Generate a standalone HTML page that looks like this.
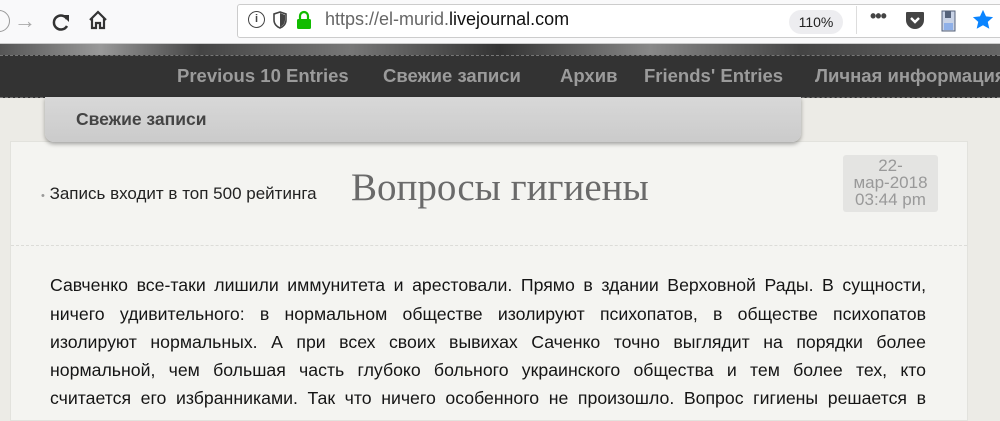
<!DOCTYPE html>
<html><head><meta charset="utf-8"><style>
*{margin:0;padding:0;box-sizing:border-box}
body{width:1000px;height:408px;overflow:hidden;background:#ecebe6;font-family:"Liberation Sans","DejaVu Sans",sans-serif;position:relative}
.abs{position:absolute}
#tb{left:0;top:0;width:1000px;height:44px;background:#f9f9fa;border-bottom:1px solid #ccc}
#url{left:237px;top:4px;width:770px;height:34px;background:#fff;border:1px solid #ccc;border-radius:3px}
#banner{left:0;top:44px;width:1000px;height:12px;background:linear-gradient(90deg,#555,#999 10%,#444 20%,#777 35%,#333 50%,#888 65%,#444 80%,#666)}
#nav{left:0;top:55px;width:1000px;height:43px;background:#333;border-top:1px dashed #777;border-bottom:1px dashed #777}
#nav span{position:absolute;top:9px;color:#9b9b9b;font-weight:bold;font-size:18.5px;white-space:nowrap}
#sub{left:45px;top:97px;width:756px;height:45px;background:linear-gradient(#d8d8d8,#cbcbcb);border-radius:0 0 9px 9px;box-shadow:0 2px 4px rgba(0,0,0,.35)}
#panel{left:10px;top:141px;width:958px;height:280px;background:#f4f4f1;border:1px solid #e2e2dd}
.ln{position:absolute;left:50px;width:876px;font-size:17.7px;color:#151515;text-align:justify;text-align-last:justify;line-height:20px;height:21px;overflow:hidden}
</style></head><body>
<div id="tb" class="abs"></div>
<div class="abs" style="left:-12px;top:10px;width:22px;height:22px;border:1px solid #999;border-radius:50%"></div>
<div class="abs" style="left:14px;top:8px;font-size:22px;color:#aaa">→</div>
<svg class="abs" style="left:50px;top:11px" width="22" height="22" viewBox="0 0 22 22"><path d="M17 8A7 7 0 1 0 17 15" fill="none" stroke="#333" stroke-width="2.5"/><path d="M12 4h7v7z" fill="#333"/></svg>
<svg class="abs" style="left:87px;top:9px" width="22" height="22" viewBox="0 0 22 22"><path d="M3 11L11 3 19 11M5 9v10h4v-5h4v5h4V9" fill="none" stroke="#333" stroke-width="2.2"/></svg>
<div id="url" class="abs"></div>
<div class="abs" style="left:248px;top:11px;width:17px;height:17px;border:1.5px solid #444;border-radius:50%;font-size:11px;text-align:center;line-height:15px;color:#444;font-weight:bold">i</div>
<svg class="abs" style="left:273px;top:11px" width="14" height="18" viewBox="0 0 14 18"><path d="M7 1L1 3v6c0 4 3 7 6 8 3-1 6-4 6-8V3z" fill="none" stroke="#444" stroke-width="1.6"/><path d="M7 2v14c2-1 5-3 5-7V4z" fill="#444"/></svg>
<svg class="abs" style="left:296px;top:10px" width="16" height="20" viewBox="0 0 16 20"><path d="M4 9V6a4 4 0 0 1 8 0v3" fill="none" stroke="#12bc00" stroke-width="2.2"/><rect x="1" y="9" width="14" height="10" rx="1.5" fill="#12bc00"/></svg>
<div class="abs" style="left:325px;top:9px;font-size:18px;color:#666">https://el-murid.<span style="color:#111">livejournal.com</span></div>
<div class="abs" style="left:789px;top:10px;width:54px;height:24px;background:#ededf0;border-radius:12px;font-size:14px;color:#222;text-align:center;line-height:24px">110%</div>
<div class="abs" style="left:856px;top:6px;width:1px;height:28px;background:#ddd"></div>
<div class="abs" style="left:870px;top:6px;font-size:18px;color:#444;letter-spacing:-1px;font-weight:bold">•••</div>
<svg class="abs" style="left:905px;top:11px" width="20" height="19" viewBox="0 0 20 19"><path d="M2 1h16a1 1 0 0 1 1 1v7a9 9 0 0 1-18 0V2a1 1 0 0 1 1-1z" fill="#444"/><path d="M6 7l4 4 4-4" fill="none" stroke="#fff" stroke-width="2.4"/></svg>
<svg class="abs" style="left:941px;top:10px" width="16" height="22" viewBox="0 0 16 22"><rect x="1" y="1" width="13" height="20" fill="#c9d3e6" stroke="#55627a"/><rect x="4" y="1" width="6" height="7" fill="#55627a"/><rect x="3" y="13" width="9" height="7" fill="#8fb0e8"/></svg>
<svg class="abs" style="left:972px;top:9px" width="22" height="22" viewBox="0 0 24 24"><path d="M12 1l3.3 7 7.7.8-5.8 5.2 1.7 7.6L12 17.7 5.1 21.6l1.7-7.6L1 8.8 8.7 8z" fill="#0a84ff"/></svg>
<div id="banner" class="abs"></div>
<div id="nav" class="abs">
<span style="left:177px">Previous 10 Entries</span>
<span style="left:383px">Свежие записи</span>
<span style="left:560px">Архив</span>
<span style="left:644px">Friends' Entries</span>
<span style="left:815px">Личная информация</span>
</div>
<div id="panel" class="abs"></div>
<div id="sub" class="abs"><div style="position:absolute;left:31px;top:12px;font-size:17.5px;font-weight:bold;color:#444">Свежие записи</div></div>
<div class="abs" style="left:41px;top:184px;font-size:17px;color:#222"><span style="color:#999;font-size:11px">•</span> Запись входит в топ 500 рейтинга</div>
<div class="abs" style="left:351px;top:165px;font-family:'Liberation Serif',serif;font-size:39px;color:#6a6a6a">Вопросы гигиены</div>
<div class="abs" style="left:843px;top:155px;width:95px;height:57px;background:#e4e4e2;border-radius:3px;color:#999;font-size:17px;text-align:center;line-height:17px;padding-top:2px">22-<br>мар-2018<br>03:44 pm</div>
<div class="abs" style="left:11px;top:245px;width:956px;border-top:1px dashed #dcdcd8"></div>
<div class="ln" style="top:275px">Савченко все-таки лишили иммунитета и арестовали. Прямо в здании Верховной Рады. В сущности,</div>
<div class="ln" style="top:304px">ничего удивительного: в нормальном обществе изолируют психопатов, в обществе психопатов</div>
<div class="ln" style="top:332px">изолируют нормальных. А при всех своих вывихах Саченко точно выглядит на порядки более</div>
<div class="ln" style="top:360px">нормальной, чем большая часть глубоко больного украинского общества и тем более тех, кто</div>
<div class="ln" style="top:388px">считается его избранниками. Так что ничего особенного не произошло. Вопрос гигиены решается в</div>
</body></html>
